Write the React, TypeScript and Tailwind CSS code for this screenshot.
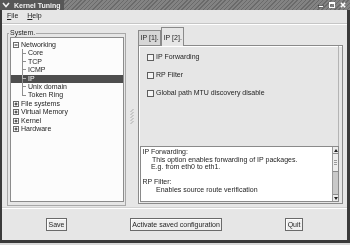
import React from "react";

const Expander = ({ open }: { open?: boolean }) => (
  <svg width="6" height="6" viewBox="0 0 6 6" className="shrink-0">
    <rect x="0.5" y="0.5" width="5" height="5" fill="#fff" stroke="#6a6a6a" />
    <path d="M1.5 3h3" stroke="#222" />
    {!open && <path d="M3 1.5v3" stroke="#222" />}
  </svg>
);

const networking = ["Core", "TCP", "ICMP", "IP", "Unix domain", "Token Ring"];
const topLevel = ["File systems", "Virtual Memory", "Kernel", "Hardware"];

function ChildRow({ label, last, selected }: { label: string; last: boolean; selected: boolean }) {
  return (
    <div className={`flex h-[8.4px] items-center pl-[11px] ${selected ? "bg-[#4e4e4e] text-white" : ""}`}>
      <div className="flex h-full w-[4px] flex-col">
        <div className={`h-1/2 border-b border-l ${selected ? "border-[#b5b5b5]" : "border-[#8e8e8e]"}`} />
        <div className={`h-1/2 ${last ? "" : "border-l"} border-[#8e8e8e]`} />
      </div>
      <span className="ml-[2px]">{label}</span>
    </div>
  );
}

const Checkbox = ({ label }: { label: string }) => (
  <div className="flex h-[18px] items-center gap-[2px] pl-[7px]">
    <span className="h-[7px] w-[7px] border border-[#5e5e5e] bg-[#f4f4f4]" />
    <span>{label}</span>
  </div>
);

const Btn = ({ label }: { label: string }) => (
  <button className="flex h-[13px] items-center whitespace-nowrap border border-[#6a6a6a] bg-[#efefef] px-[1.5px] leading-none shadow-[inset_1px_1px_0_#fff]">
    {label}
  </button>
);

export default function App() {
  return (
    <div className="flex h-[245px] w-[350px] flex-col bg-[#d8d8d8] font-['Liberation_Sans',Arial,sans-serif] text-[7px] text-[#1e1e1e] grayscale">
      {/* title bar */}
      <div className="flex h-[10px] items-center bg-[repeating-linear-gradient(135deg,#6a6a6a_0px,#6a6a6a_1px,#838383_1px,#838383_3px)]">
        <div className="flex h-full items-center bg-[#575757] pr-[3px]">
          <svg width="8" height="6" viewBox="0 0 8 6" className="ml-[2px]">
            <path d="M1 1l3 3.5L7 1" fill="none" stroke="#f0f0f0" strokeWidth="1.6" />
          </svg>
          <span className="ml-[4px] font-bold leading-none text-[#f2f2f2]">Kernel Tuning</span>
        </div>
        <div className="ml-auto flex items-center gap-[5px] pr-[4px]">
          <svg width="6" height="6" viewBox="0 0 6 6">
            <rect x="0.5" y="3.5" width="5" height="2" fill="#fff" stroke="#333" strokeWidth="0.6" />
          </svg>
          <svg width="6" height="6" viewBox="0 0 6 6">
            <rect x="0.5" y="0.5" width="5" height="5" fill="none" stroke="#fff" strokeWidth="1" />
            <rect x="0.5" y="0.5" width="5" height="1.5" fill="#fff" />
          </svg>
          <svg width="6" height="6" viewBox="0 0 6 6">
            <path d="M0.8 0.8l4.4 4.4M5.2 0.8l-4.4 4.4" stroke="#fff" strokeWidth="1.5" />
          </svg>
        </div>
      </div>

      {/* window body */}
      <div className="flex h-[233px] flex-col border-b-[3px] border-l-[2px] border-r-[3px] border-[#3a3a3a] bg-[#e6e6e6]">
        {/* menu */}
        <div className="flex h-[13px] items-center gap-[9px] pl-[5px]">
          <span><span className="underline">F</span>ile</span>
          <span><span className="underline">H</span>elp</span>
        </div>
        <div className="h-[2px] border-b border-t border-b-white border-t-[#c6c6c6]" />

        {/* content */}
        <div className="flex h-[182px]">
          <fieldset className="ml-[5px] mt-[4px] flex h-[177px] w-[119px] flex-col border border-[#a8a8a8] pb-[3px] pl-[2px] pr-[1px]">
            <legend className="-ml-[1px] px-[1px] leading-[8px]">System.</legend>
            <div className="flex-1 border border-[#8c8c8c] bg-[#fcfcfc] pt-[3px] leading-[8.4px]">
              <div className="flex h-[8.4px] items-center gap-[2px] pl-[2px]">
                <Expander open />
                <span>Networking</span>
              </div>
              {networking.map((n, i) => (
                <ChildRow key={n} label={n} last={i === networking.length - 1} selected={n === "IP"} />
              ))}
              {topLevel.map((n) => (
                <div key={n} className="flex h-[8.4px] items-center gap-[2px] pl-[2px]">
                  <Expander />
                  <span>{n}</span>
                </div>
              ))}
            </div>
          </fieldset>

          {/* pane handle */}
          <div className="flex w-[12px] items-center justify-center pt-[2px]">
            <svg width="4" height="16" viewBox="0 0 4 16">
              {[0, 3, 6, 9, 12].map((y) => (
                <path key={y} d={`M0.5 ${y + 3}l3 -3`} stroke="#9c9c9c" strokeWidth="0.8" />
              ))}
            </svg>
          </div>

          {/* notebook */}
          <div className="mt-[2px] flex w-[205px] flex-col">
            <div className="flex h-[18px] items-end whitespace-nowrap">
              <div className="flex h-[15px] items-center border-l border-r border-t border-[#8a8a8a] bg-[#d6d6d6] px-[1.5px]">
                IP [1].
              </div>
              <div className="relative z-10 -mb-px flex h-[19px] items-center border-l border-r border-t border-[#8a8a8a] bg-[#e6e6e6] px-[1.5px] pt-[2px]">
                IP [2].
              </div>
            </div>
            <div className="flex h-[159px] flex-col border border-[#8a8a8a] pb-[1px] pl-[1px] pr-[3px] shadow-[inset_1px_1px_0_#fff]">
              <div className="flex-1 border-r border-[#b4b4b4] pt-[2px]">
                <Checkbox label="IP Forwarding" />
                <Checkbox label="RP Filter" />
                <Checkbox label="Global path MTU discovery disable" />
              </div>
              <div className="flex h-[56px] border border-[#8a8a8a] bg-white">
                <div className="flex-1 whitespace-nowrap pl-[1.5px] pt-[1px] leading-[7.6px]">
                  <div>IP Forwarding:</div>
                  <div className="pl-[9.5px]">This option enables forwarding of IP packages.</div>
                  <div className="pl-[8.5px]">E.g. from eth0 to eth1.</div>
                  <div className="h-[7.6px]" />
                  <div>RP Filter:</div>
                  <div className="pl-[13.5px]">Enables source route verification</div>
                </div>
                <div className="flex w-[6px] flex-col border-l border-[#9a9a9a] bg-[#c9c9c9]">
                  <div className="flex h-[7px] items-center justify-center border-b border-[#8a8a8a] bg-[#ececec]">
                    <svg width="4" height="3" viewBox="0 0 4 3">
                      <path d="M0 3L2 0L4 3z" fill="#222" />
                    </svg>
                  </div>
                  <div className="flex h-[18px] flex-col items-center justify-center gap-[1px] border-b border-[#8a8a8a] bg-[#ededed]">
                    <div className="h-px w-[3px] bg-[#9a9a9a]" />
                    <div className="h-px w-[3px] bg-[#9a9a9a]" />
                    <div className="h-px w-[3px] bg-[#9a9a9a]" />
                  </div>
                  <div className="flex-1" />
                  <div className="flex h-[7px] items-center justify-center border-t border-[#8a8a8a] bg-[#ececec]">
                    <svg width="4" height="3" viewBox="0 0 4 3">
                      <path d="M0 0L2 3L4 0z" fill="#222" />
                    </svg>
                  </div>
                </div>
              </div>
            </div>
          </div>
        </div>

        <div className="h-[2px] border-b border-t border-b-white border-t-[#d2d2d2]" />

        {/* buttons */}
        <div className="flex flex-1 items-center justify-between px-[44px]">
          <Btn label="Save" />
          <Btn label="Activate saved configuration" />
          <Btn label="Quit" />
        </div>
      </div>
    </div>
  );
}
